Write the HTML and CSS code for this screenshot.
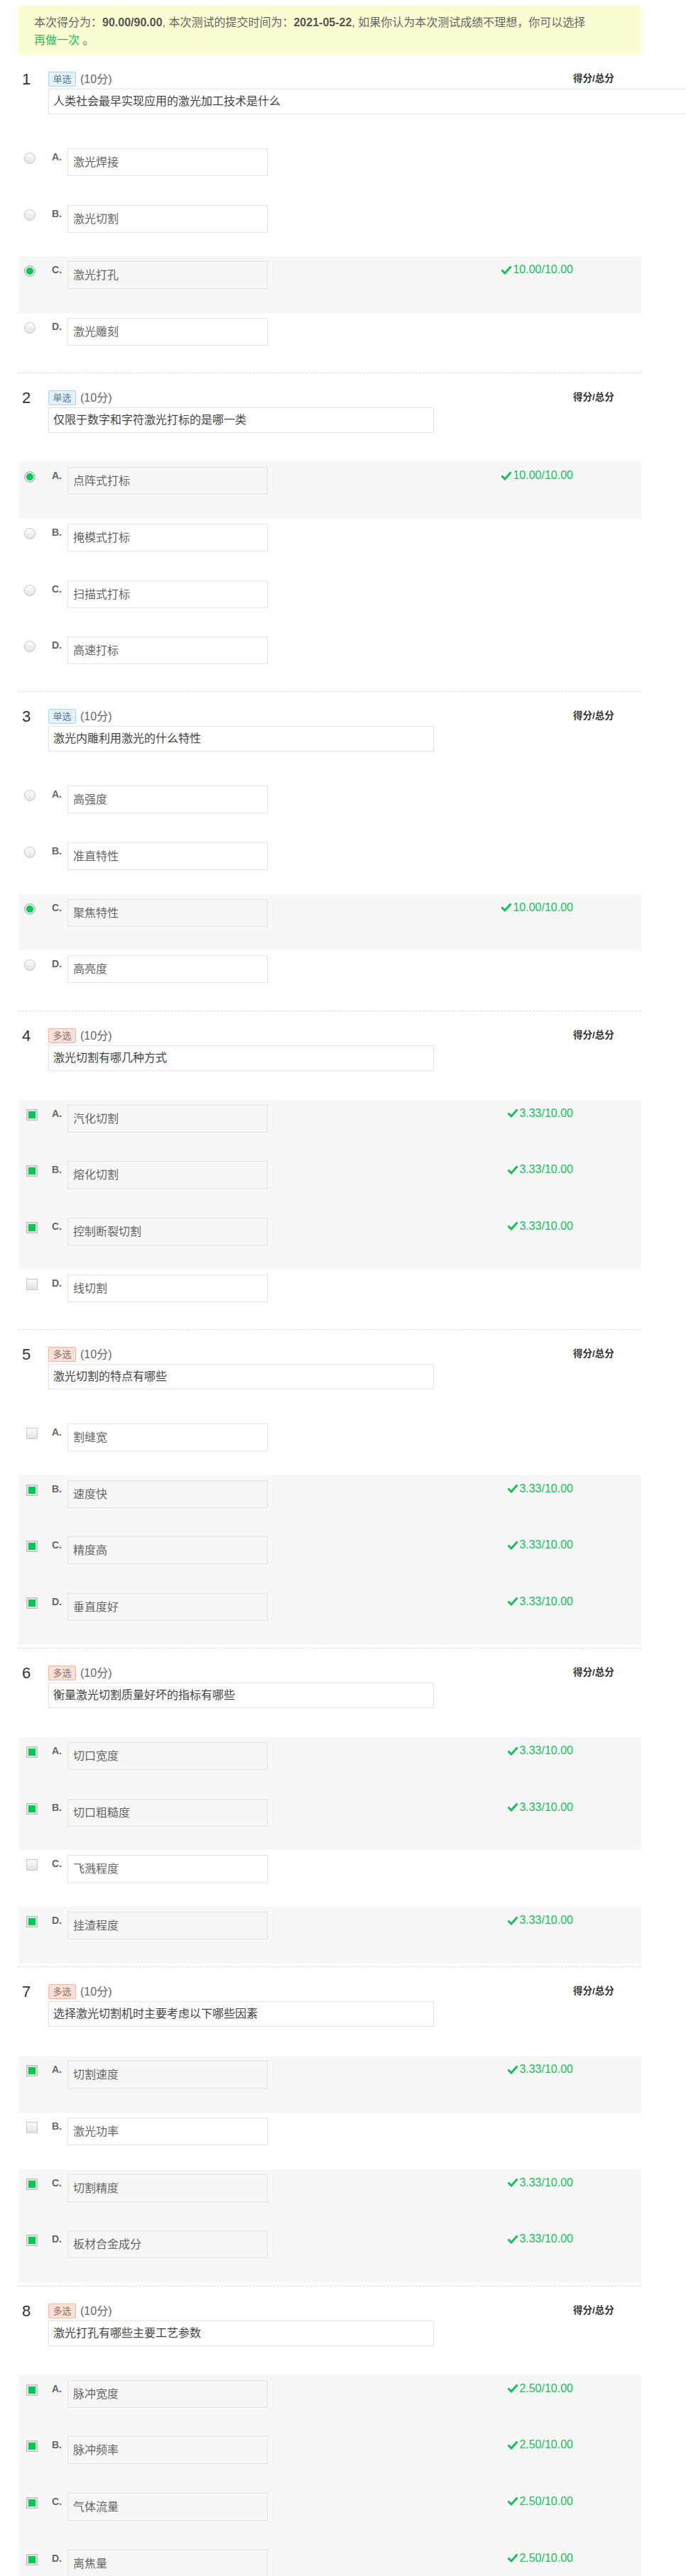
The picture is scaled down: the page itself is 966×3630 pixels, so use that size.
FILE: index.html
```html
<!DOCTYPE html>
<html lang="zh-CN">
<head>
<meta charset="utf-8">
<title>测试结果</title>
<link rel="stylesheet" href="styles.css">
</head>
<body>
<div class="page">
  <div class="notice">本次得分为：<b>90.00/90.00</b>, 本次测试的提交时间为：<b>2021-05-22</b>, 如果你认为本次测试成绩不理想，你可以选择<span class="nobr"><a class="redo">再做一次</a> 。</span></div>

  <div class="question first">
    <div class="qhead"><span class="qnum">1</span><span class="tag single">单选</span><span class="pts">(10分)</span><span class="scorehead">得分/总分</span></div>
    <div class="qtext wide">人类社会最早实现应用的激光加工技术是什么</div>
    <div class="opts">
      <div class="opt"><span class="radio"></span><span class="lbl">A.</span><div class="otext">激光焊接</div></div>
      <div class="opt"><span class="radio"></span><span class="lbl">B.</span><div class="otext">激光切割</div></div>
      <div class="opt on"><span class="radio checked"></span><span class="lbl">C.</span><div class="otext">激光打孔</div><span class="score"><svg class="ok" viewBox="0 0 16 13"><path d="M1.5 6.5 L6 11 L14.5 1.5"/></svg>10.00/10.00</span></div>
      <div class="opt"><span class="radio"></span><span class="lbl">D.</span><div class="otext">激光雕刻</div></div>
    </div>
  </div>

  <div class="question">
    <div class="qhead"><span class="qnum">2</span><span class="tag single">单选</span><span class="pts">(10分)</span><span class="scorehead">得分/总分</span></div>
    <div class="qtext">仅限于数字和字符激光打标的是哪一类</div>
    <div class="opts">
      <div class="opt on"><span class="radio checked"></span><span class="lbl">A.</span><div class="otext">点阵式打标</div><span class="score"><svg class="ok" viewBox="0 0 16 13"><path d="M1.5 6.5 L6 11 L14.5 1.5"/></svg>10.00/10.00</span></div>
      <div class="opt"><span class="radio"></span><span class="lbl">B.</span><div class="otext">掩模式打标</div></div>
      <div class="opt"><span class="radio"></span><span class="lbl">C.</span><div class="otext">扫描式打标</div></div>
      <div class="opt"><span class="radio"></span><span class="lbl">D.</span><div class="otext">高速打标</div></div>
    </div>
  </div>

  <div class="question">
    <div class="qhead"><span class="qnum">3</span><span class="tag single">单选</span><span class="pts">(10分)</span><span class="scorehead">得分/总分</span></div>
    <div class="qtext">激光内雕利用激光的什么特性</div>
    <div class="opts">
      <div class="opt"><span class="radio"></span><span class="lbl">A.</span><div class="otext">高强度</div></div>
      <div class="opt"><span class="radio"></span><span class="lbl">B.</span><div class="otext">准直特性</div></div>
      <div class="opt on"><span class="radio checked"></span><span class="lbl">C.</span><div class="otext">聚焦特性</div><span class="score"><svg class="ok" viewBox="0 0 16 13"><path d="M1.5 6.5 L6 11 L14.5 1.5"/></svg>10.00/10.00</span></div>
      <div class="opt"><span class="radio"></span><span class="lbl">D.</span><div class="otext">高亮度</div></div>
    </div>
  </div>

  <div class="question">
    <div class="qhead"><span class="qnum">4</span><span class="tag multi">多选</span><span class="pts">(10分)</span><span class="scorehead">得分/总分</span></div>
    <div class="qtext">激光切割有哪几种方式</div>
    <div class="opts">
      <div class="opt on"><span class="check checked"></span><span class="lbl">A.</span><div class="otext">汽化切割</div><span class="score"><svg class="ok" viewBox="0 0 16 13"><path d="M1.5 6.5 L6 11 L14.5 1.5"/></svg>3.33/10.00</span></div>
      <div class="opt on"><span class="check checked"></span><span class="lbl">B.</span><div class="otext">熔化切割</div><span class="score"><svg class="ok" viewBox="0 0 16 13"><path d="M1.5 6.5 L6 11 L14.5 1.5"/></svg>3.33/10.00</span></div>
      <div class="opt on"><span class="check checked"></span><span class="lbl">C.</span><div class="otext">控制断裂切割</div><span class="score"><svg class="ok" viewBox="0 0 16 13"><path d="M1.5 6.5 L6 11 L14.5 1.5"/></svg>3.33/10.00</span></div>
      <div class="opt"><span class="check"></span><span class="lbl">D.</span><div class="otext">线切割</div></div>
    </div>
  </div>

  <div class="question">
    <div class="qhead"><span class="qnum">5</span><span class="tag multi">多选</span><span class="pts">(10分)</span><span class="scorehead">得分/总分</span></div>
    <div class="qtext">激光切割的特点有哪些</div>
    <div class="opts">
      <div class="opt"><span class="check"></span><span class="lbl">A.</span><div class="otext">割缝宽</div></div>
      <div class="opt on"><span class="check checked"></span><span class="lbl">B.</span><div class="otext">速度快</div><span class="score"><svg class="ok" viewBox="0 0 16 13"><path d="M1.5 6.5 L6 11 L14.5 1.5"/></svg>3.33/10.00</span></div>
      <div class="opt on"><span class="check checked"></span><span class="lbl">C.</span><div class="otext">精度高</div><span class="score"><svg class="ok" viewBox="0 0 16 13"><path d="M1.5 6.5 L6 11 L14.5 1.5"/></svg>3.33/10.00</span></div>
      <div class="opt on"><span class="check checked"></span><span class="lbl">D.</span><div class="otext">垂直度好</div><span class="score"><svg class="ok" viewBox="0 0 16 13"><path d="M1.5 6.5 L6 11 L14.5 1.5"/></svg>3.33/10.00</span></div>
    </div>
  </div>

  <div class="question">
    <div class="qhead"><span class="qnum">6</span><span class="tag multi">多选</span><span class="pts">(10分)</span><span class="scorehead">得分/总分</span></div>
    <div class="qtext">衡量激光切割质量好坏的指标有哪些</div>
    <div class="opts">
      <div class="opt on"><span class="check checked"></span><span class="lbl">A.</span><div class="otext">切口宽度</div><span class="score"><svg class="ok" viewBox="0 0 16 13"><path d="M1.5 6.5 L6 11 L14.5 1.5"/></svg>3.33/10.00</span></div>
      <div class="opt on"><span class="check checked"></span><span class="lbl">B.</span><div class="otext">切口粗糙度</div><span class="score"><svg class="ok" viewBox="0 0 16 13"><path d="M1.5 6.5 L6 11 L14.5 1.5"/></svg>3.33/10.00</span></div>
      <div class="opt"><span class="check"></span><span class="lbl">C.</span><div class="otext">飞溅程度</div></div>
      <div class="opt on"><span class="check checked"></span><span class="lbl">D.</span><div class="otext">挂渣程度</div><span class="score"><svg class="ok" viewBox="0 0 16 13"><path d="M1.5 6.5 L6 11 L14.5 1.5"/></svg>3.33/10.00</span></div>
    </div>
  </div>

  <div class="question">
    <div class="qhead"><span class="qnum">7</span><span class="tag multi">多选</span><span class="pts">(10分)</span><span class="scorehead">得分/总分</span></div>
    <div class="qtext">选择激光切割机时主要考虑以下哪些因素</div>
    <div class="opts">
      <div class="opt on"><span class="check checked"></span><span class="lbl">A.</span><div class="otext">切割速度</div><span class="score"><svg class="ok" viewBox="0 0 16 13"><path d="M1.5 6.5 L6 11 L14.5 1.5"/></svg>3.33/10.00</span></div>
      <div class="opt"><span class="check"></span><span class="lbl">B.</span><div class="otext">激光功率</div></div>
      <div class="opt on"><span class="check checked"></span><span class="lbl">C.</span><div class="otext">切割精度</div><span class="score"><svg class="ok" viewBox="0 0 16 13"><path d="M1.5 6.5 L6 11 L14.5 1.5"/></svg>3.33/10.00</span></div>
      <div class="opt on"><span class="check checked"></span><span class="lbl">D.</span><div class="otext">板材合金成分</div><span class="score"><svg class="ok" viewBox="0 0 16 13"><path d="M1.5 6.5 L6 11 L14.5 1.5"/></svg>3.33/10.00</span></div>
    </div>
  </div>

  <div class="question">
    <div class="qhead"><span class="qnum">8</span><span class="tag multi">多选</span><span class="pts">(10分)</span><span class="scorehead">得分/总分</span></div>
    <div class="qtext">激光打孔有哪些主要工艺参数</div>
    <div class="opts">
      <div class="opt on"><span class="check checked"></span><span class="lbl">A.</span><div class="otext">脉冲宽度</div><span class="score"><svg class="ok" viewBox="0 0 16 13"><path d="M1.5 6.5 L6 11 L14.5 1.5"/></svg>2.50/10.00</span></div>
      <div class="opt on"><span class="check checked"></span><span class="lbl">B.</span><div class="otext">脉冲频率</div><span class="score"><svg class="ok" viewBox="0 0 16 13"><path d="M1.5 6.5 L6 11 L14.5 1.5"/></svg>2.50/10.00</span></div>
      <div class="opt on"><span class="check checked"></span><span class="lbl">C.</span><div class="otext">气体流量</div><span class="score"><svg class="ok" viewBox="0 0 16 13"><path d="M1.5 6.5 L6 11 L14.5 1.5"/></svg>2.50/10.00</span></div>
      <div class="opt on"><span class="check checked"></span><span class="lbl">D.</span><div class="otext">离焦量</div><span class="score"><svg class="ok" viewBox="0 0 16 13"><path d="M1.5 6.5 L6 11 L14.5 1.5"/></svg>2.50/10.00</span></div>
    </div>
  </div>
</div>
</body>
</html>
```

FILE: styles.css
```css
html, body {
  margin: 0;
  padding: 0;
  background: #fff;
}
body {
  font-family: "Liberation Sans", "Noto Sans CJK SC", sans-serif;
  color: #555;
  overflow: hidden;
}
.page {
  width: 877px;
  margin: 8px 0 0 26px;
}
.notice {
  background: #fcfdd0;
  padding: 11px 22px 8px 22px;
  font-size: 16px;
  line-height: 25px;
  color: #666;
}
.notice b {
  color: #555;
  font-weight: bold;
}
.nobr {
  white-space: nowrap;
}
.redo {
  color: #12c15a;
  text-decoration: none;
}
.question {
  border-top: 1px dashed #dcdcdc;
  padding: 24px 0 4.6px 0;
}
.question.first {
  border-top: 0;
}
.qhead {
  display: flex;
  align-items: flex-start;
  height: 24px;
}
.qnum {
  width: 37px;
  padding-left: 5px;
  font-size: 22px;
  line-height: 22px;
  color: #333;
}
.tag {
  box-sizing: border-box;
  width: 39px;
  height: 21px;
  border: 1px solid;
  border-radius: 2px;
  font-size: 13px;
  line-height: 19px;
  text-align: center;
  color: #667;
}
.tag.single {
  background: #e3f2fd;
  border-color: #a8d5f5;
  color: #5d7a90;
}
.tag.multi {
  background: #fde1d8;
  border-color: #f6b39b;
  color: #8a7168;
}
.pts {
  margin-left: 6px;
  font-size: 16px;
  line-height: 21px;
  color: #666;
}
.scorehead {
  margin-left: auto;
  width: 57px;
  margin-right: 39px;
  font-size: 13.5px;
  line-height: 20px;
  font-weight: bold;
  color: #333;
  white-space: nowrap;
}
.qtext {
  box-sizing: border-box;
  margin-left: 42px;
  width: 543px;
  height: 36px;
  border: 1px solid #e2e2e2;
  padding: 0 6px;
  font-size: 16px;
  line-height: 34px;
  color: #444;
}
.qtext.wide {
  width: 898px;
  border-right: 0;
}
.opts {
  margin-top: 41px;
}
.opt {
  box-sizing: border-box;
  display: flex;
  align-items: flex-start;
  height: 79.67px;
  padding-top: 7px;
}
.opt.on {
  background: #f7f7f7;
}
.radio {
  box-sizing: border-box;
  width: 16px;
  height: 16px;
  margin: 6px 0 0 8px;
  border-radius: 50%;
  border: 1px solid #c4c4c4;
  background: linear-gradient(#fdfdfd, #e4e4e4);
}
.radio.checked {
  background: #00c853;
  border: 1px solid #bdbdbd;
  box-shadow: inset 0 0 0 2px #e6e6e6;
}
.check {
  box-sizing: border-box;
  width: 16px;
  height: 16px;
  margin: 6px 0 0 11px;
  border: 1px solid #c8c8c8;
  background: linear-gradient(#fbfbfb, #e2e2e2);
}
.check.checked {
  background: #00c853;
  border: 1px solid #bcbcbc;
  box-shadow: inset 0 0 0 2px #e2e2e2;
}
.radio + .lbl {
  margin-left: 23px;
}
.check + .lbl {
  margin-left: 20px;
}
.lbl {
  width: 22px;
  margin-top: 4px;
  font-size: 14px;
  line-height: 16px;
  font-weight: bold;
  color: #666;
}
.otext {
  box-sizing: border-box;
  width: 282px;
  height: 39px;
  border: 1px solid #e2e2e2;
  padding: 0 7px;
  font-size: 16px;
  line-height: 37px;
  color: #666;
}
.score {
  display: flex;
  align-items: center;
  margin-left: auto;
  margin-right: 96px;
  margin-top: 2px;
  font-size: 16px;
  line-height: 20px;
  color: #12c15a;
  white-space: nowrap;
}
.ok {
  width: 16px;
  height: 13px;
  margin-right: 1px;
  fill: none;
  stroke: #12c15a;
  stroke-width: 3;
}
```
